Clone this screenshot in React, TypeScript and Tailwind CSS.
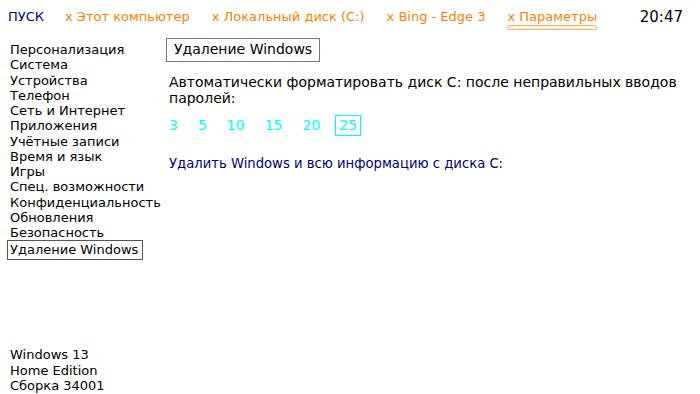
import React from "react";

const items = [
  "Персонализация",
  "Система",
  "Устройства",
  "Телефон",
  "Сеть и Интернет",
  "Приложения",
  "Учётные записи",
  "Время и язык",
  "Игры",
  "Спец. возможности",
  "Конфиденциальность",
  "Обновления",
  "Безопасность",
];

export default function App() {
  return (
    <div
      className="w-[700px] h-[394px] bg-white text-black flex flex-col overflow-hidden text-[13px]"
      style={{ fontFamily: '"DejaVu Sans", sans-serif' }}
    >
      <div className="h-[36px] flex items-start pt-[9px] text-[13px] leading-[16px] pl-[8px] pr-[17px]">
        <span className="text-[#000080]">ПУСК</span>
        <span className="ml-[21px] text-[#ff8000]">x Этот компьютер</span>
        <span className="ml-[22px] text-[#ff8000]">x Локальный диск (C:)</span>
        <span className="ml-[22px] text-[#ff8000]">x Bing - Edge 3</span>
        <span className="ml-[22px] text-[#ff8000] flex flex-col items-stretch">
          <span>x Параметры</span>
          <span className="mt-[0px] h-[5px] border border-[#ffb060] rounded-[2px] bg-[#fff6ec]" />
        </span>
        <span className="ml-auto text-[15px] leading-[18px] -mt-[1px]">20:47</span>
      </div>
      <div className="flex flex-1">
        <div className="w-[158px] pl-[7px] pt-[6px] flex flex-col leading-[15.25px]">
          {items.map((t) => (
            <div key={t} className="pl-[3px]">
              {t}
            </div>
          ))}
          <div className="pl-[3px] self-start pr-[5px] outline outline-1 outline-[#555] -outline-offset-1 py-[2px] -my-[1px] mt-[0px]">
            Удаление Windows
          </div>
          <div className="mt-auto pb-[1px] pl-[3px] leading-[15.25px]">
            <div>Windows 13</div>
            <div>Home Edition</div>
            <div>Сборка 34001</div>
          </div>
        </div>
        <div className="flex-1 pl-[8px] pt-[2px]">
          <div className="inline-block border border-[#777] px-[7px] h-[24px] leading-[21px] text-[14px]">
            Удаление Windows
          </div>
          <div className="mt-[12px] text-[14px] leading-[16px] pr-[20px] pl-[3px]">
            Автоматически форматировать диск C: после неправильных вводов паролей:
          </div>
          <div className="mt-[8px] flex items-center text-[14px] text-[#00ffff] h-[22px]">
            <span className="ml-[3px]">3</span>
            <span className="ml-[20px]">5</span>
            <span className="ml-[20px]">10</span>
            <span className="ml-[20px]">15</span>
            <span className="ml-[20px]">20</span>
            <span className="ml-[15px] border border-[#00ffff] px-[3px] h-[21px] leading-[19px]">25</span>
          </div>
          <div className="mt-[18px] text-[13.2px] text-[#000080] ml-[3px]">
            Удалить Windows и всю информацию с диска C:
          </div>
        </div>
      </div>
    </div>
  );
}
